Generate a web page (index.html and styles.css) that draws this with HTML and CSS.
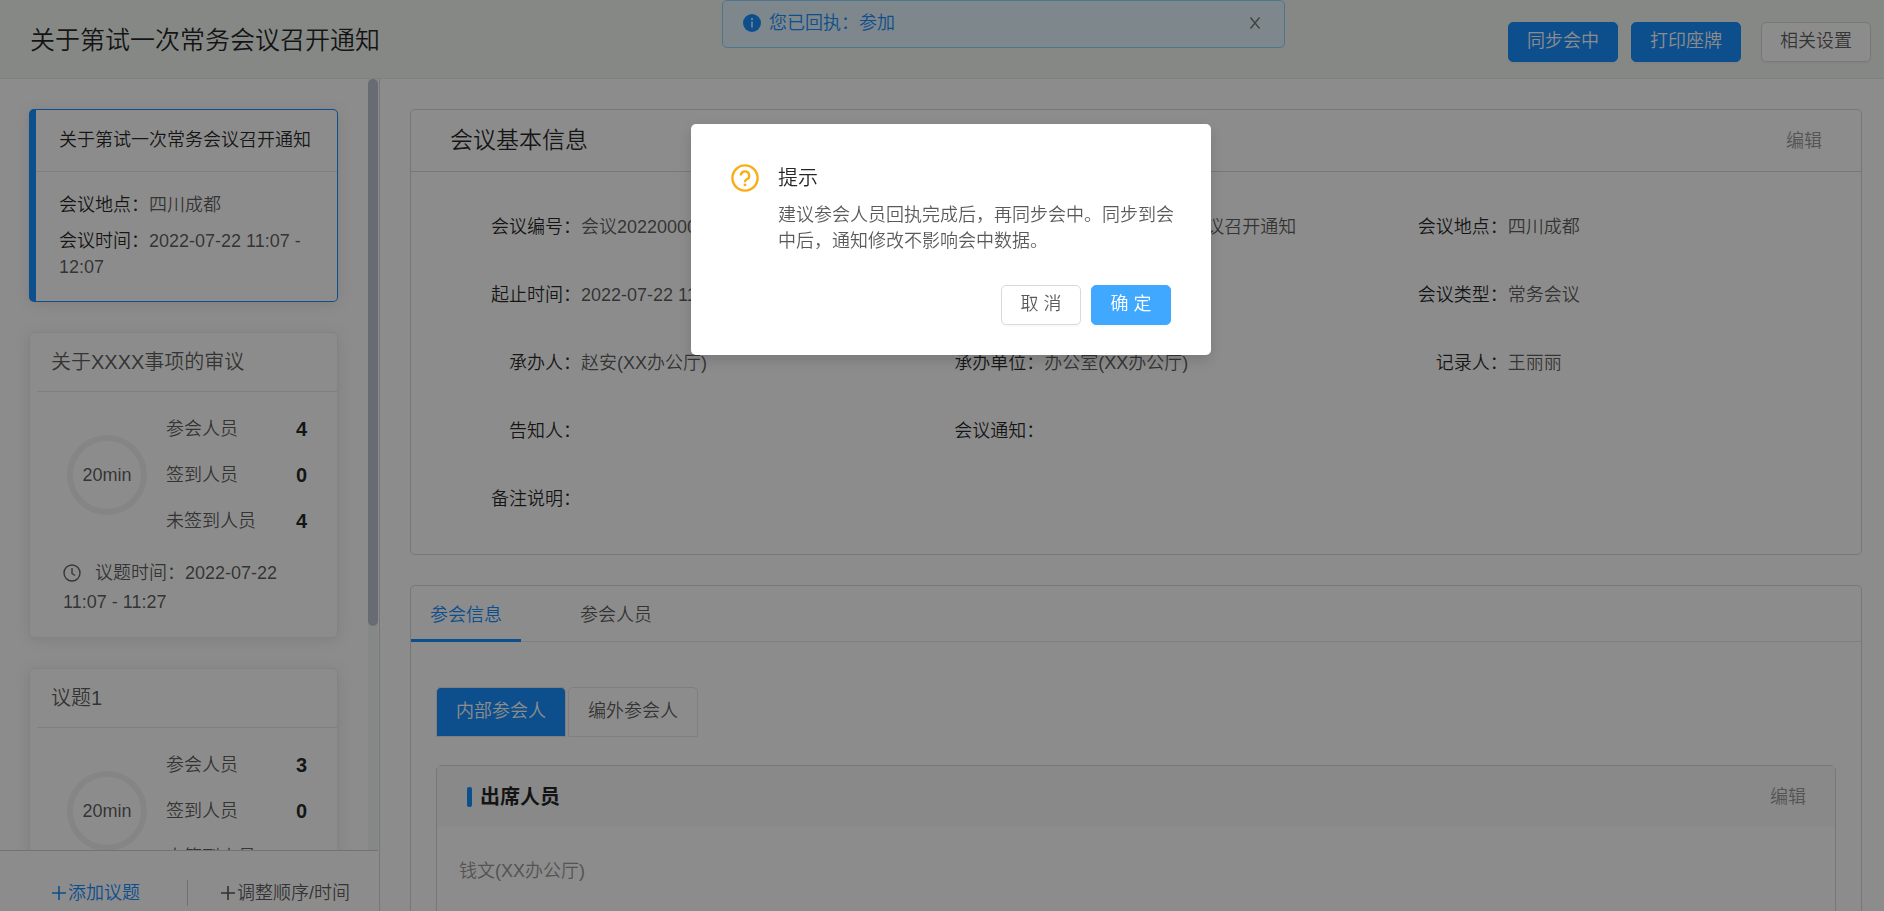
FILE: index.html
```html
<!DOCTYPE html>
<html lang="zh-CN">
<head>
    <meta charset="UTF-8">
    <meta name="viewport" content="width=device-width, initial-scale=1.0">
    <title>关于第试一次常务会议召开通知</title>
    <link rel="stylesheet" href="styles.css">
</head>
<body>
    <header class="header">
        <h1>关于第试一次常务会议召开通知</h1>
        <div class="header-actions">
            <button class="btn btn-primary" type="button">同步会中</button>
            <button class="btn btn-primary" type="button">打印座牌</button>
            <button class="btn btn-setting" type="button">相关设置</button>
        </div>
        <div class="alert" role="status">
            <svg class="alert-icon" viewBox="0 0 18 18" aria-hidden="true">
                <circle cx="9" cy="9" r="9" fill="#1890ff"/>
                <circle cx="9" cy="5" r="1" fill="#fff"/>
                <path d="M9 7.5v6" stroke="#fff" stroke-width="1.4"/>
            </svg>
            <span class="alert-text">您已回执：参加</span>
            <button class="alert-close" type="button" aria-label="关闭">
                <svg viewBox="0 0 12 12" width="12" height="12"><path d="M1.5 0.5l9 11M10.5 0.5l-9 11" stroke="#777" stroke-width="1.4" fill="none"/></svg>
            </button>
        </div>
    </header>

    <div class="layout">
        <aside class="sidebar">
            <div class="sidebar-scroll">
                <div class="sidebar-list">
                    <section class="meeting-card">
                        <h2>关于第试一次常务会议召开通知</h2>
                        <div class="meeting-body">
                            <p><span class="label">会议地点：</span>四川成都</p>
                            <p><span class="label">会议时间：</span>2022-07-22 11:07 - 12:07</p>
                        </div>
                    </section>

                    <section class="topic-card">
                        <h2>关于XXXX事项的审议</h2>
                        <div class="topic-body">
                            <div class="ring">20min</div>
                            <dl class="counts">
                                <div><dt>参会人员</dt><dd>4</dd></div>
                                <div><dt>签到人员</dt><dd>0</dd></div>
                                <div><dt>未签到人员</dt><dd>4</dd></div>
                            </dl>
                        </div>
                        <p class="topic-time">
                            <svg class="clock" viewBox="0 0 18 18" aria-hidden="true"><circle cx="9" cy="9" r="8"/><path d="M9 4v5.5l3 2"/></svg>议题时间：2022-07-22 11:07 - 11:27
                        </p>
                    </section>

                    <section class="topic-card">
                        <h2>议题1</h2>
                        <div class="topic-body">
                            <div class="ring">20min</div>
                            <dl class="counts">
                                <div><dt>参会人员</dt><dd>3</dd></div>
                                <div><dt>签到人员</dt><dd>0</dd></div>
                                <div><dt>未签到人员</dt><dd>3</dd></div>
                            </dl>
                        </div>
                    </section>
                </div>
                <div class="scrollbar"><div class="scrollbar-thumb"></div></div>
            </div>
            <div class="sidebar-footer">
                <button class="link-btn link-add" type="button">
                    <svg viewBox="0 0 14 14" width="14" height="14" aria-hidden="true"><path d="M7 0v14M0 7h14"/></svg>
                    添加议题
                </button>
                <button class="link-btn link-sort" type="button">
                    <svg viewBox="0 0 14 14" width="14" height="14" aria-hidden="true"><path d="M7 0v14M0 7h14"/></svg>
                    调整顺序/时间
                </button>
            </div>
        </aside>

        <main class="main">
            <section class="panel">
                <div class="panel-head">
                    <h2>会议基本信息</h2>
                    <button class="edit" type="button">编辑</button>
                </div>
                <dl class="info">
                    <div><dt>会议编号：</dt><dd>会议20220000</dd></div>
                    <div><dt>会议名称：</dt><dd>关于第试一次常务会议召开通知</dd></div>
                    <div><dt>会议地点：</dt><dd>四川成都</dd></div>
                    <div class="wide"><dt>起止时间：</dt><dd>2022-07-22 11:07 - 12:07</dd></div>
                    <div><dt>会议类型：</dt><dd>常务会议</dd></div>
                    <div><dt>承办人：</dt><dd>赵安(XX办公厅)</dd></div>
                    <div><dt>承办单位：</dt><dd>办公室(XX办公厅)</dd></div>
                    <div><dt>记录人：</dt><dd>王丽丽</dd></div>
                    <div><dt>告知人：</dt><dd></dd></div>
                    <div class="wide"><dt>会议通知：</dt><dd></dd></div>
                    <div><dt>备注说明：</dt><dd></dd></div>
                </dl>
            </section>

            <section class="panel">
                <div class="tabs" role="tablist">
                    <button class="tab active" type="button" role="tab" aria-selected="true">参会信息</button>
                    <button class="tab" type="button" role="tab" aria-selected="false">参会人员</button>
                </div>
                <div class="tab-content">
                    <div class="card-tabs" role="tablist">
                        <button class="card-tab active" type="button" role="tab" aria-selected="true">内部参会人</button>
                        <button class="card-tab" type="button" role="tab" aria-selected="false">编外参会人</button>
                    </div>
                    <div class="people">
                        <div class="people-head">
                            <h3>出席人员</h3>
                            <button class="edit" type="button">编辑</button>
                        </div>
                        <p>钱文(XX办公厅)</p>
                    </div>
                </div>
            </section>
        </main>
    </div>

    <div class="mask">
        <div class="modal" role="dialog" aria-modal="true" aria-labelledby="modal-title">
            <div class="modal-body">
                <svg class="modal-icon" viewBox="0 0 28 28" aria-hidden="true">
                    <circle cx="14" cy="14" r="12.6"/>
                    <path d="M9.8 11.6a4.2 4.2 0 1 1 5.8 3.9c-1 .4-1.6 1-1.6 2v.7"/>
                    <circle class="dot" cx="14" cy="20.9" r="1.4"/>
                </svg>
                <div>
                    <h2 id="modal-title">提示</h2>
                    <p>建议参会人员回执完成后，再同步会中。同步到会中后，通知修改不影响会中数据。</p>
                </div>
            </div>
            <div class="modal-footer">
                <button class="btn btn-cancel" type="button">取 消</button>
                <button class="btn btn-ok" type="button">确 定</button>
            </div>
        </div>
    </div>
</body>
</html>
```

FILE: styles.css
```css
* {
    box-sizing: border-box;
}
body {
    margin: 0;
    height: 100vh;
    display: flex;
    flex-direction: column;
    overflow: hidden;
    font-family: "Liberation Sans", "Noto Sans CJK SC", sans-serif;
    font-size: 18px;
    font-weight: 350;
    line-height: 26px;
    color: rgba(0, 0, 0, 0.65);
    background-color: #fff;
}
h1, h2, h3, p, dl, dd {
    margin: 0;
    font-weight: 350;
}
button {
    font: inherit;
    color: inherit;
    background: none;
    border: 0;
    padding: 0;
    cursor: pointer;
}

/* header */
.header {
    position: relative;
    flex: none;
    display: flex;
    align-items: center;
    justify-content: space-between;
    height: 79px;
    padding: 2px 13px 0 30px;
    background-color: #f4f8f5;
    border-bottom: 1px solid #e8ecea;
}
.header h1 {
    font-size: 25px;
    line-height: 36px;
    color: rgba(0, 0, 0, 0.85);
}
.header-actions {
    display: flex;
    gap: 13px;
    padding-top: 4px;
}
.btn {
    height: 40px;
    padding-bottom: 2px;
    border: 1px solid #d9d9d9;
    border-radius: 5px;
    background-color: #fff;
    box-shadow: 0 2px 0 rgba(0, 0, 0, 0.02);
}
.header .btn {
    width: 110px;
}
.btn-primary {
    background-color: #1890ff;
    border-color: #1890ff;
    color: #fff;
}
.btn-setting {
    margin-left: 7px;
}
.alert {
    position: absolute;
    top: 0;
    left: 722px;
    width: 563px;
    display: flex;
    align-items: center;
    height: 48px;
    padding: 0 23px 2px 20px;
    background-color: #e6f7ff;
    border: 1px solid #91d5ff;
    border-radius: 5px;
    color: #1890ff;
}
.alert-icon {
    width: 18px;
    height: 18px;
    margin-right: 8px;
}
.alert-text {
    flex: 1;
}
.alert-close {
    display: flex;
}

/* sidebar */
.layout {
    flex: 1;
    min-height: 0;
    display: flex;
}
.sidebar {
    flex: none;
    width: 380px;
    display: flex;
    flex-direction: column;
    border-right: 1px solid #d9d9d9;
}
.sidebar-scroll {
    flex: 1;
    min-height: 0;
    display: flex;
    padding-right: 1px;
    overflow: hidden;
}
.sidebar-list {
    flex: 1;
    display: flex;
    flex-direction: column;
    gap: 30px;
    padding: 30px 30px 0 29px;
}
.scrollbar {
    width: 10px;
    background-color: #f5f8f7;
}
.scrollbar-thumb {
    height: 71%;
    border-radius: 5px;
    background-color: #bdc4d4;
}
.meeting-card,
.topic-card {
    flex: none;
    border: 1px solid #ebeef0;
    border-radius: 5px;
    box-shadow: 0 2px 15px rgba(0, 0, 0, 0.1);
}
.meeting-card {
    border-color: #1890ff;
    border-left-width: 7px;
}
.meeting-card h2 {
    padding: 17px 0 18px 23px;
    font-size: 18px;
    line-height: 26px;
    white-space: nowrap;
    color: rgba(0, 0, 0, 0.85);
    border-bottom: 1px solid #e8e8e8;
}
.meeting-body {
    padding: 20px 22px 21px 23px;
}
.meeting-body p + p {
    margin-top: 10px;
}
.label {
    color: rgba(0, 0, 0, 0.85);
}
.topic-card {
    padding-left: 7px;
}
.topic-card h2 {
    padding: 15px 14px 14px;
    font-size: 20px;
    line-height: 29px;
    border-bottom: 1px solid #e8e8e8;
}
.topic-body {
    display: flex;
    align-items: center;
    gap: 19px;
    padding: 14px 30px 0;
}
.ring {
    flex: none;
    display: flex;
    align-items: center;
    justify-content: center;
    width: 80px;
    height: 80px;
    border: 6px solid #f3f3f3;
    border-radius: 50%;
}
.counts {
    flex: 1;
}
.counts div {
    display: flex;
    align-items: center;
    justify-content: space-between;
    height: 46px;
}
.counts dd {
    font-size: 20px;
    font-weight: 700;
    color: rgba(0, 0, 0, 0.85);
}
.topic-time {
    padding: 15px 30px 20px 26px;
    line-height: 29px;
}
.clock {
    width: 18px;
    height: 18px;
    margin-right: 14px;
    vertical-align: -3px;
    fill: none;
    stroke: #666;
    stroke-width: 1.4;
}
.sidebar-footer {
    flex: none;
    display: flex;
    align-items: center;
    height: 61px;
    margin-right: 1px;
    padding: 24px 0 0 52px;
    border-top: 1px solid #cfd2dc;
}
.link-btn {
    display: flex;
    align-items: center;
    gap: 2px;
    white-space: nowrap;
}
.link-btn svg {
    stroke: currentColor;
    stroke-width: 1.6;
}
.link-add {
    flex: 1;
    color: #1890ff;
    border-right: 1px solid #ccc;
}
.link-sort {
    padding: 0 28px 0 33px;
}

/* main */
.main {
    flex: 1;
    min-width: 0;
    padding: 30px 22px 0 30px;
    overflow: hidden;
}
.panel {
    border: 1px solid #d9d9d9;
    border-radius: 5px;
}
.panel + .panel {
    margin-top: 30px;
    height: 400px;
}
.panel-head {
    display: flex;
    align-items: center;
    justify-content: space-between;
    height: 62px;
    padding: 0 39px;
    border-bottom: 1px solid #d9d9d9;
}
.panel-head h2 {
    font-size: 23px;
    line-height: 33px;
    color: rgba(0, 0, 0, 0.85);
}
.edit {
    color: #999;
}
.info {
    display: grid;
    grid-template-columns: repeat(3, 1fr);
    row-gap: 42px;
    padding: 42px 30px;
}
.info div {
    display: flex;
    min-height: 26px;
}
.info .wide {
    grid-column: span 2;
}
.info dt {
    flex: none;
    width: 140px;
    text-align: right;
    color: rgba(0, 0, 0, 0.85);
}
.tabs {
    display: flex;
    gap: 40px;
    height: 56px;
    border-bottom: 1px solid #e8e8e8;
}
.tab {
    padding: 4px 19px 0;
    margin-bottom: -1px;
    border-bottom: 3px solid transparent;
}
.tab.active {
    color: #1890ff;
    border-bottom-color: #1890ff;
}
.tab-content {
    padding: 45px 25px 0;
}
.card-tabs {
    display: flex;
    gap: 2px;
    margin-bottom: 28px;
}
.card-tab {
    height: 50px;
    padding: 0 19px 2px;
    border: 1px solid #e8e8e8;
    border-radius: 5px 5px 0 0;
}
.card-tab.active {
    color: #fff;
    background-color: #1890ff;
}
.people {
    height: 300px;
    border: 1px solid #d9d9d9;
    border-radius: 5px;
}
.people-head {
    display: flex;
    align-items: center;
    justify-content: space-between;
    height: 61px;
    padding: 0 29px 0 30px;
    background-color: #f9f9f9;
}
.people-head h3 {
    display: flex;
    align-items: center;
    gap: 8px;
    font-size: 20px;
    font-weight: 700;
    color: rgba(0, 0, 0, 0.85);
}
.people-head h3::before {
    content: "";
    width: 5px;
    height: 20px;
    border-radius: 2px;
    background-color: #1890ff;
}
.people p {
    padding: 31px 22px;
    color: #999;
}

/* confirm dialog */
.mask {
    position: fixed;
    inset: 0;
    display: flex;
    align-items: flex-start;
    justify-content: center;
    padding: 124px 0 0 18px;
    background-color: rgba(0, 0, 0, 0.45);
}
.modal {
    width: 520px;
    padding: 40px 36px 30px 40px;
    background-color: #fff;
    border-radius: 5px;
    box-shadow: 0 5px 15px rgba(0, 0, 0, 0.15);
}
.modal-body {
    display: flex;
    gap: 19px;
}
.modal-icon {
    flex: none;
    width: 28px;
    height: 28px;
    fill: none;
    stroke: #faad14;
    stroke-width: 2.4;
}
.modal-icon .dot {
    fill: #faad14;
    stroke: none;
}
.modal h2 {
    font-size: 20px;
    line-height: 28px;
    margin-bottom: 10px;
    color: rgba(0, 0, 0, 0.85);
}
.modal-footer {
    display: flex;
    justify-content: flex-end;
    gap: 10px;
    padding: 31px 4px 0 0;
}
.modal .btn {
    width: 80px;
}
.modal .btn-ok {
    background-color: #40a9ff;
    border-color: #40a9ff;
    color: #fff;
}
```
